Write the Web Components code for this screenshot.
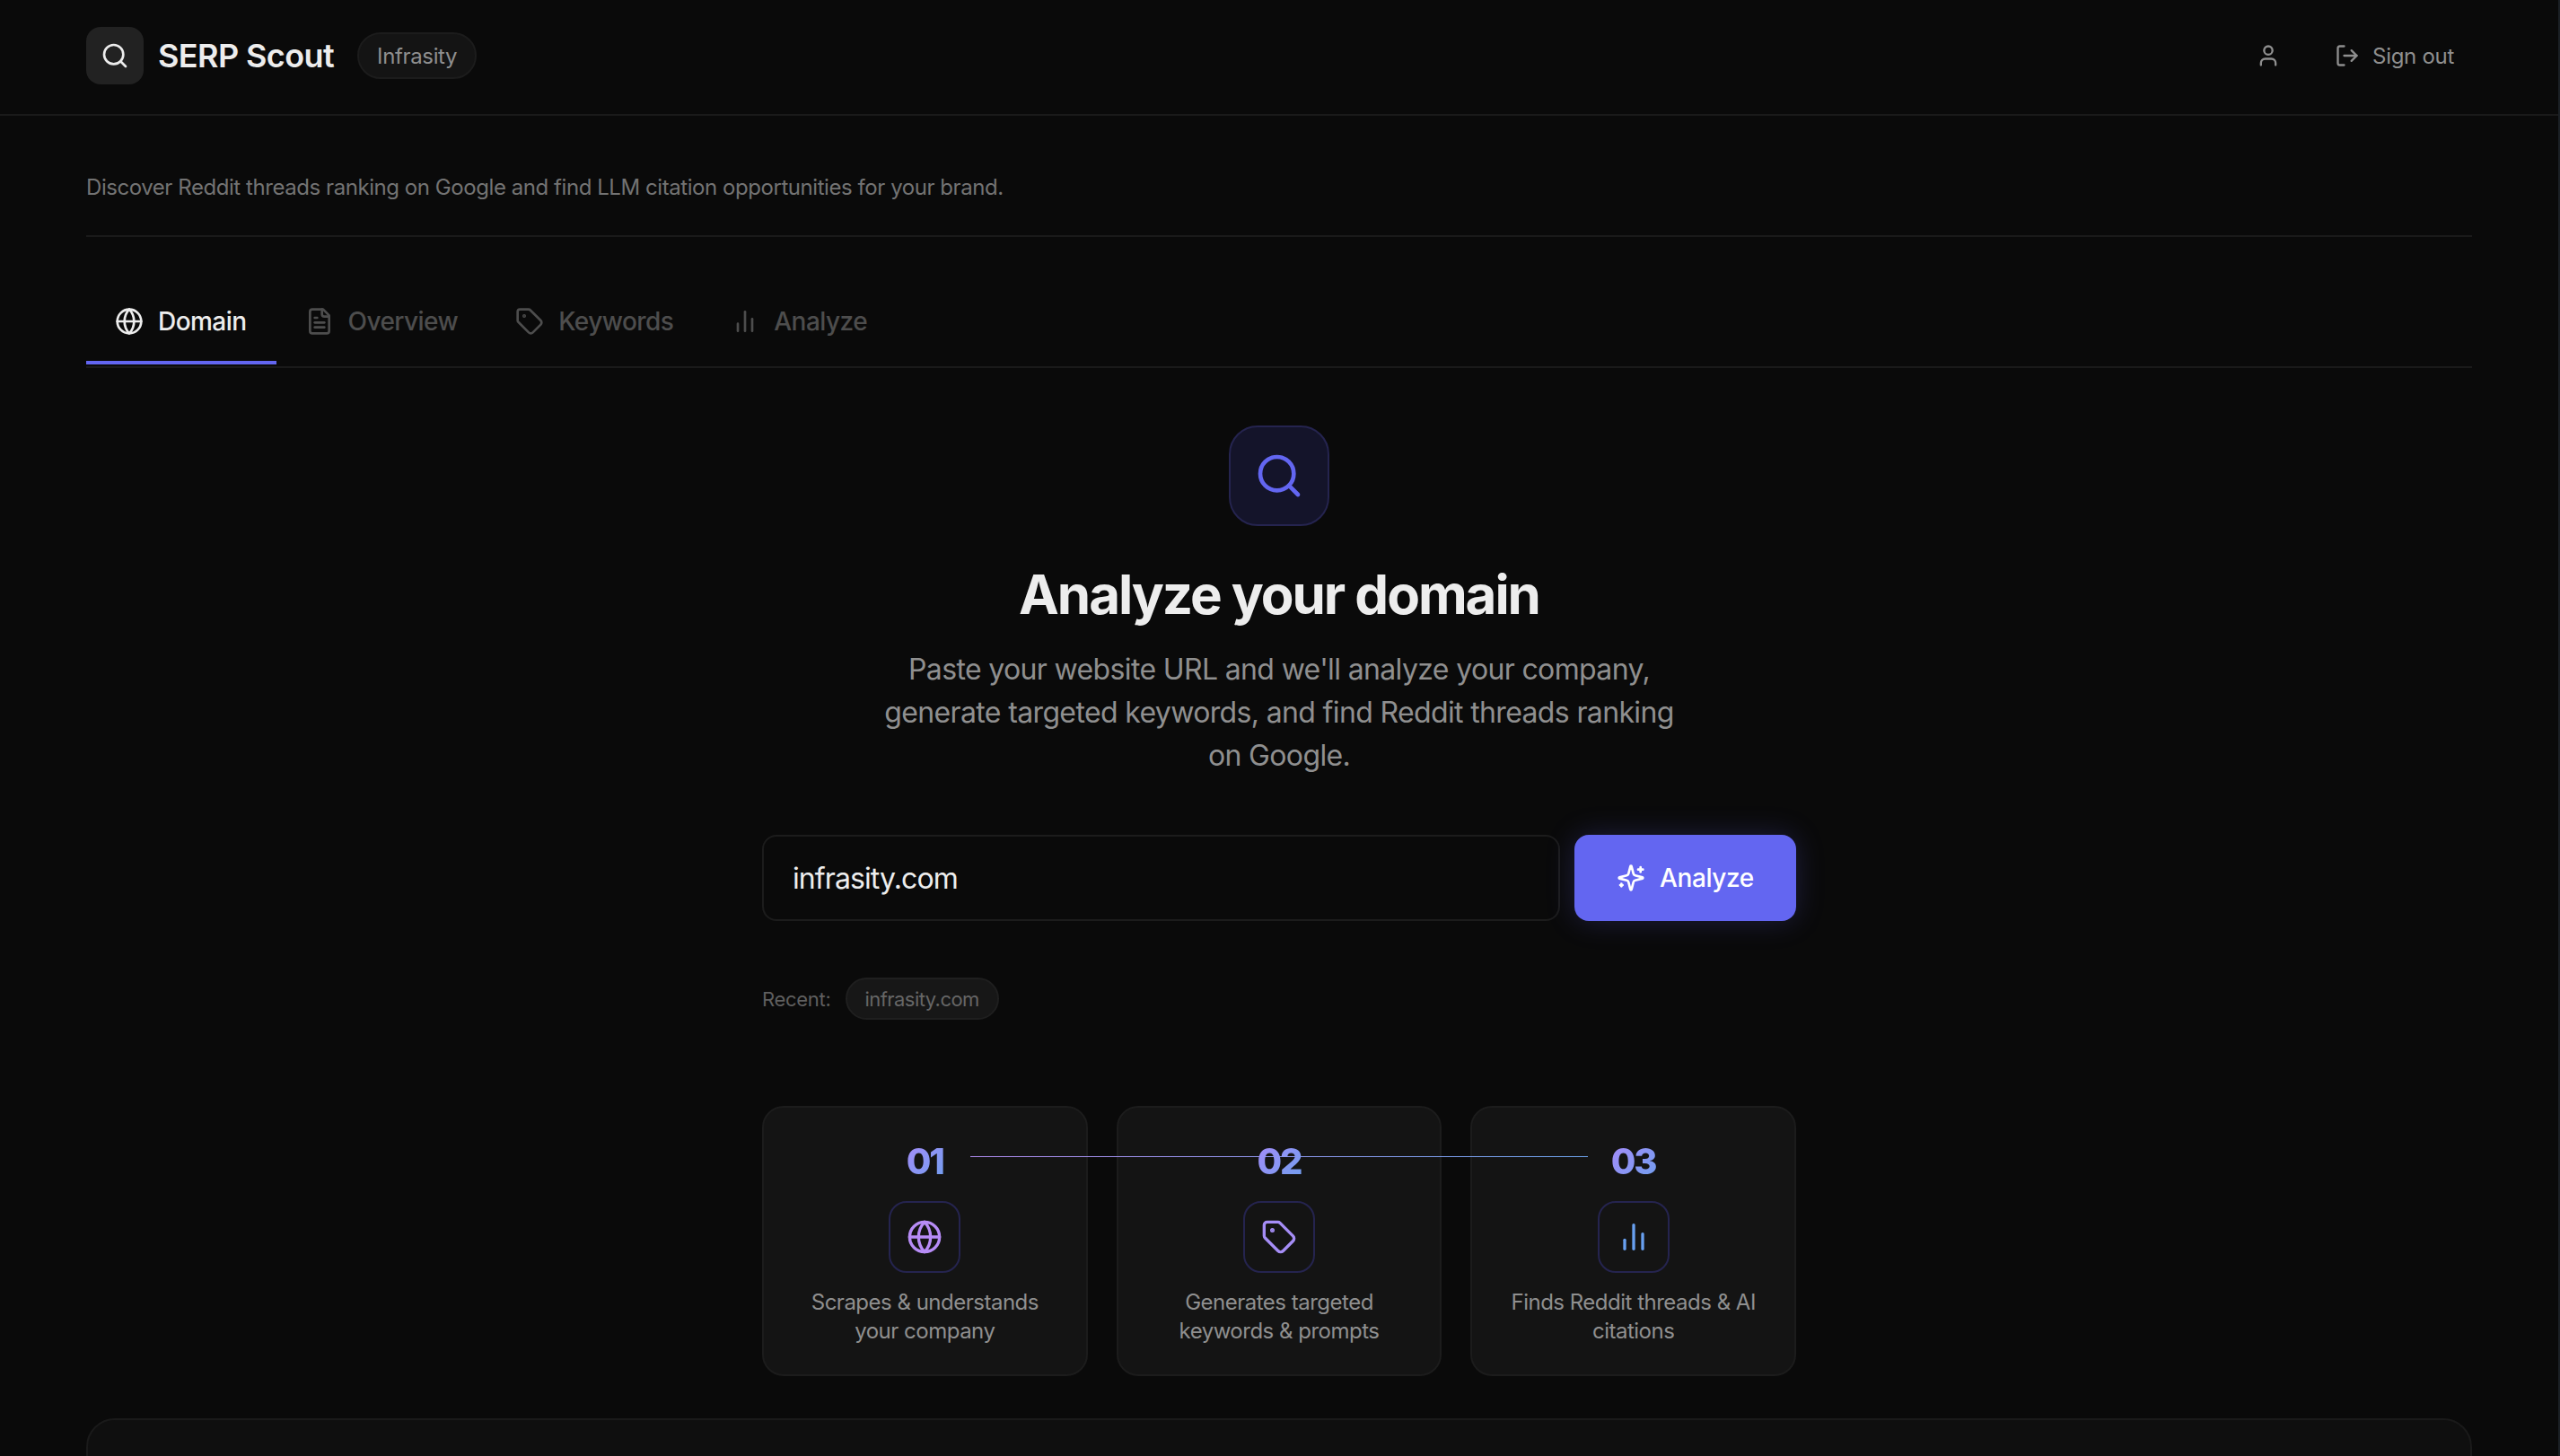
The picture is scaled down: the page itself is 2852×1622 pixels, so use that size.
<!DOCTYPE html>
<html lang="en">
<head>
<meta charset="utf-8">
<title>SERP Scout</title>
<style>
  html, body { margin: 0; height: 100%; background: #0a0a0a; }
  body { font-family: Inter, "Liberation Sans", sans-serif; color: #ededed; height: 1622px; overflow: hidden; box-sizing: border-box; border-right: 2px solid #1b2025; }
</style>
</head>
<body>
<app-shell>
  <app-header slot="header" brand="SERP Scout" workspace="Infrasity"></app-header>
  <p-tagline>Discover Reddit threads ranking on Google and find LLM citation opportunities for your brand.</p-tagline>
  <tab-bar>
    <tab-item icon="globe" active>Domain</tab-item>
    <tab-item icon="file">Overview</tab-item>
    <tab-item icon="tag">Keywords</tab-item>
    <tab-item icon="bars">Analyze</tab-item>
  </tab-bar>
  <domain-hero></domain-hero>
  <step-row>
    <step-card num="01" icon="globe" tint="#b78cf6">Scrapes &amp; understands<br>your company</step-card>
    <step-card num="02" icon="tag" tint="#a58df6">Generates targeted<br>keywords &amp; prompts</step-card>
    <step-card num="03" icon="bars" tint="#68a0f0">Finds Reddit threads &amp; AI<br>citations</step-card>
  </step-row>
  <empty-panel></empty-panel>
</app-shell>

<script>
// lucide style icon bodies
const ICONS = {
  search: '<circle cx="11" cy="11" r="8"/><path d="m21 21-4.3-4.3"/>',
  user: '<circle cx="12" cy="7" r="4"/><path d="M19 21v-2a4 4 0 0 0-4-4H9a4 4 0 0 0-4 4v2"/>',
  logout: '<path d="M9 21H5a2 2 0 0 1-2-2V5a2 2 0 0 1 2-2h4"/><path d="m16 17 5-5-5-5"/><path d="M21 12H9"/>',
  globe: '<circle cx="12" cy="12" r="10"/><path d="M12 2a14.5 14.5 0 0 0 0 20 14.5 14.5 0 0 0 0-20"/><path d="M2 12h20"/>',
  file: '<path d="M15 2H6a2 2 0 0 0-2 2v16a2 2 0 0 0 2 2h12a2 2 0 0 0 2-2V7Z"/><path d="M14 2v4a2 2 0 0 0 2 2h4"/><path d="M10 9H8"/><path d="M16 13H8"/><path d="M16 17H8"/>',
  tag: '<path d="M12.586 2.586A2 2 0 0 0 11.172 2H4a2 2 0 0 0-2 2v7.172a2 2 0 0 0 .586 1.414l8.704 8.704a2.426 2.426 0 0 0 3.42 0l6.58-6.58a2.426 2.426 0 0 0 0-3.42z"/><circle cx="7.5" cy="7.5" r=".5" fill="currentColor"/>',
  bars: '<path d="M18 20V10"/><path d="M12 20V4"/><path d="M6 20v-6"/>',
  sparkles: '<path d="M9.937 15.5A2 2 0 0 0 8.5 14.063l-6.135-1.582a.5.5 0 0 1 0-.962L8.5 9.936A2 2 0 0 0 9.937 8.5l1.582-6.135a.5.5 0 0 1 .963 0L14.063 8.5A2 2 0 0 0 15.5 9.937l6.135 1.581a.5.5 0 0 1 0 .964L15.5 14.063a2 2 0 0 0-1.437 1.437l-1.582 6.135a.5.5 0 0 1-.963 0z"/><path d="M20 3v4"/><path d="M22 5h-4"/><path d="M4 17v2"/><path d="M5 18H3"/>'
};

class UiIcon extends HTMLElement {
  connectedCallback () {
    const size = this.getAttribute('size') || 32;
    const stroke = this.getAttribute('stroke') || 2;
    if (!this.shadowRoot) this.attachShadow({mode: 'open'});
    this.shadowRoot.innerHTML = `
      <style>:host { display: inline-flex; flex: none; } svg { display: block; }</style>
      <svg xmlns="http://www.w3.org/2000/svg" width="${size}" height="${size}" viewBox="0 0 24 24" fill="none"
        stroke="currentColor" stroke-width="${stroke}" stroke-linecap="round" stroke-linejoin="round">${ICONS[this.getAttribute('name')]}</svg>`;
  }
}
customElements.define('ui-icon', UiIcon);

class AppShell extends HTMLElement {
  constructor () {
    super();
    this.attachShadow({mode: 'open'}).innerHTML = `
      <style>
        :host { display: block; }
        main { padding: 0 96px; }
      </style>
      <slot name="header"></slot>
      <main><slot></slot></main>`;
  }
}
customElements.define('app-shell', AppShell);

class AppHeader extends HTMLElement {
  connectedCallback () {
    this.attachShadow({mode: 'open'}).innerHTML = `
      <style>
        :host { display: flex; align-items: center; justify-content: space-between; height: 124px; padding: 0 96px 3px 96px; border-bottom: 2px solid #1a1a1a; }
        .left, .right { display: flex; align-items: center; }
        .logo { width: 64px; height: 64px; border-radius: 16px; background: #222; color: #ededed; display: flex; align-items: center; justify-content: center; }
        .brand { font-size: 36px; font-weight: 600; line-height: 44px; margin-left: 16px; letter-spacing: -0.6px; color: #ededed; }
        .badge { margin-left: 26px; height: 48px; padding: 0 20px; border: 2px solid #1c1c1c; border-radius: 26px; background: #141414; color: #8f8f8f; font-size: 24px; display: flex; align-items: center; letter-spacing: -0.35px; }
        .right { color: #8f8f8f; }
        .user { display: flex; margin-right: 40px; }
        .out { display: flex; align-items: center; gap: 14px; font-size: 24px; padding: 0 20px; letter-spacing: -0.3px; }
      </style>
      <div class="left">
        <div class="logo"><ui-icon name="search" size="32"></ui-icon></div>
        <div class="brand">${this.getAttribute('brand')}</div>
        <div class="badge">${this.getAttribute('workspace')}</div>
      </div>
      <div class="right">
        <div class="user"><ui-icon name="user" size="28"></ui-icon></div>
        <div class="out"><ui-icon name="logout" size="28"></ui-icon><span>Sign out</span></div>
      </div>`;
  }
}
customElements.define('app-header', AppHeader);

class PTagline extends HTMLElement {
  constructor () {
    super();
    this.attachShadow({mode: 'open'}).innerHTML = `
      <style>
        :host { display: block; padding: 63px 0 36px; border-bottom: 2px solid #1a1a1a; color: #737373; font-size: 24px; line-height: 34px; letter-spacing: -0.44px; }
      </style>
      <slot></slot>`;
  }
}
customElements.define('p-tagline', PTagline);

class TabBar extends HTMLElement {
  constructor () {
    super();
    this.attachShadow({mode: 'open'}).innerHTML = `
      <style>
        :host { display: flex; margin-top: 46px; padding-bottom: 2px; border-bottom: 2px solid #1a1a1a; }
      </style>
      <slot></slot>`;
  }
}
customElements.define('tab-bar', TabBar);

class TabItem extends HTMLElement {
  connectedCallback () {
    this.attachShadow({mode: 'open'}).innerHTML = `
      <style>
        :host { display: flex; align-items: center; gap: 16px; padding: 28px 32px 24px; font-size: 28px; line-height: 40px; font-weight: 500; color: #4d4d4d; border-bottom: 4px solid transparent; letter-spacing: -0.55px; }
        :host([active]) { color: #ededed; border-bottom-color: #6366f1; padding-right: 33px; }
      </style>
      <ui-icon name="${this.getAttribute('icon')}" size="32"></ui-icon><slot></slot>`;
  }
}
customElements.define('tab-item', TabItem);

class DomainHero extends HTMLElement {
  connectedCallback () {
    this.attachShadow({mode: 'open'}).innerHTML = `
      <style>
        :host { display: flex; flex-direction: column; align-items: center; padding-top: 64px; }
        .mark { width: 112px; height: 112px; box-sizing: border-box; border: 2px solid #25244f; border-radius: 32px; background: #14142a; color: #6366f1; display: flex; align-items: center; justify-content: center; }
        h1 { margin: 40px 0 0; font-size: 60px; line-height: 72px; font-weight: 700; letter-spacing: -2.05px; color: #ededed; }
        p { margin: 24px 0 0; width: 900px; text-align: center; font-size: 32px; line-height: 48px; color: #8f8f8f; letter-spacing: -0.64px; }
        .form { width: 1152px; margin-top: 64px; display: flex; gap: 16px; }
        .field { flex: 1; min-width: 0; height: 96px; box-sizing: border-box; border: 2px solid #1c1c1c; border-radius: 16px; padding: 0 32px; background: #0a0a0a; color: #ededed; font: inherit; font-size: 32px; letter-spacing: -0.9px; outline: none; }
        .go { width: 247px; height: 96px; border: 0; border-radius: 16px; background: #6366f1; color: #fff; font: inherit; font-size: 28px; font-weight: 500; letter-spacing: -0.4px; display: flex; align-items: center; justify-content: center; gap: 16px; box-shadow: 0 0 32px rgba(99, 102, 241, .22); }
        .recent { width: 1152px; margin-top: 63px; display: flex; align-items: center; gap: 16px; font-size: 22px; color: #5f5f5f; letter-spacing: -0.3px; }
        .chip { height: 47px; box-sizing: border-box; padding: 0 20px; border: 2px solid #1f1f1f; border-radius: 24px; background: #171717; display: flex; align-items: center; color: #666; letter-spacing: -0.55px; }
      </style>
      <div class="mark"><ui-icon name="search" size="56"></ui-icon></div>
      <h1>Analyze your domain</h1>
      <p>Paste your website URL and we'll analyze your company, generate targeted keywords, and find Reddit threads ranking on Google.</p>
      <div class="form">
        <input class="field" value="infrasity.com" aria-label="Domain">
        <button class="go"><ui-icon name="sparkles" size="32"></ui-icon>Analyze</button>
      </div>
      <div class="recent"><span>Recent:</span><span class="chip">infrasity.com</span></div>`;
  }
}
customElements.define('domain-hero', DomainHero);

class StepRow extends HTMLElement {
  constructor () {
    super();
    this.attachShadow({mode: 'open'}).innerHTML = `
      <style>
        :host { display: grid; grid-template-columns: repeat(3, 1fr); gap: 32px; width: 1152px; margin: 96px auto 0; position: relative; }
        .line { position: absolute; left: 232px; right: 232px; top: 56px; height: 1px; background: linear-gradient(90deg, #b08cf0, #6ea4ee); }
      </style>
      <slot></slot><div class="line"></div>`;
  }
}
customElements.define('step-row', StepRow);

class StepCard extends HTMLElement {
  connectedCallback () {
    this.attachShadow({mode: 'open'}).innerHTML = `
      <style>
        :host { display: flex; flex-direction: column; align-items: center; height: 301px; box-sizing: border-box; padding-top: 36px; border: 2px solid #1c1c1c; border-radius: 24px; background: #141414; }
        .num { position: relative; z-index: 1; font-size: 40px; line-height: 48px; font-weight: 800; letter-spacing: -2px; background: linear-gradient(135deg, #a78bfa, #6f9fee); -webkit-background-clip: text; background-clip: text; color: transparent; }
        .box { margin-top: 20px; width: 80px; height: 80px; box-sizing: border-box; border: 2px solid #25244f; border-radius: 20px; display: flex; align-items: center; justify-content: center; color: ${this.getAttribute('tint')}; }
        .txt { margin-top: 17px; text-align: center; font-size: 24px; line-height: 32px; color: #8f8f8f; letter-spacing: -0.5px; }
      </style>
      <div class="num">${this.getAttribute('num')}</div>
      <div class="box"><ui-icon name="${this.getAttribute('icon')}" size="40"></ui-icon></div>
      <div class="txt"><slot></slot></div>`;
  }
}
customElements.define('step-card', StepCard);

class EmptyPanel extends HTMLElement {
  constructor () {
    super();
    this.attachShadow({mode: 'open'}).innerHTML = `
      <style>
        :host { display: block; margin-top: 47px; height: 200px; border: 2px solid #1a1a1a; border-radius: 32px; background: #0f0f0f; }
      </style>`;
  }
}
customElements.define('empty-panel', EmptyPanel);
</script>
</body>
</html>
